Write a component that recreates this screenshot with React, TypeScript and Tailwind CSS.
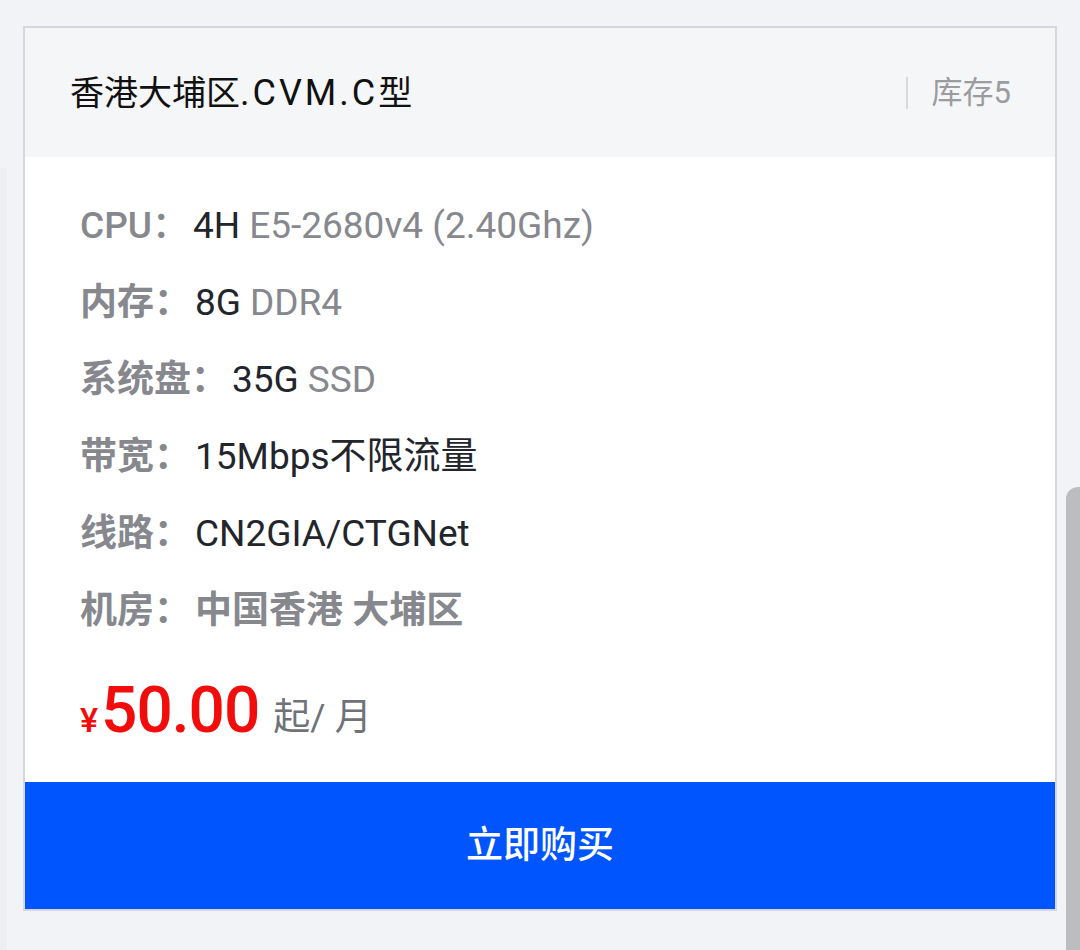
const specs = [
  { label: "CPU", main: "4H", extra: "E5-2680v4 (2.40Ghz)" },
  { label: "内存", main: "8G", extra: "DDR4" },
  { label: "系统盘", main: "35G", extra: "SSD" },
  { label: "带宽", main: "15Mbps不限流量" },
  { label: "线路", main: "CN2GIA/CTGNet" },
  { label: "机房", place: "中国香港 大埔区" },
];

const font = "font-['Roboto','Noto_Sans_CJK_SC',sans-serif]";

export function ProductCard() {
  return (
    <div className="w-[1034px] border-2 border-[#d6d7dc] bg-white">
      <div className="flex h-[129px] items-center bg-[#f5f6f8] pl-[45px] pr-[44px]">
        <h3 className="flex-1 text-[34px] leading-none text-[#111]">
          香港大埔区<span className="text-[36px] tracking-[3px]">.CVM.C</span>型
        </h3>
        <span className="mr-[24px] h-[32px] w-[2px] bg-[#d9d9dc]" />
        <span className="text-[31px] leading-none text-[#9c9c9f]">库存5</span>
      </div>
      <div className="pl-[55px] pt-[30px]">
        {specs.map((s) => (
          <div key={s.label} className="flex h-[77px] items-center text-[37px] leading-none">
            <span
              className={
                s.label === "CPU"
                  ? "font-medium text-[#86888e]"
                  : "font-semibold text-[#86888e]"
              }
            >
              {s.label}：
            </span>
            {s.main && <span className="ml-[4px] text-[#22252b]">{s.main}</span>}
            {s.extra && <span className="ml-[9px] text-[#86888e]">{s.extra}</span>}
            {s.place && (
              <span className="ml-[4px] font-semibold text-[#86888e]">{s.place}</span>
            )}
          </div>
        ))}
        <div className="flex h-[133px] items-center pb-[10px]">
          <span className="mt-[18px] text-[34px] font-medium leading-none text-[#f20d0d]">¥</span>
          <span className="ml-[3px] text-[64px] font-medium leading-none tracking-[-1px] text-[#f20d0d]">
            50.00
          </span>
          <span className="ml-[14px] mt-[14px] text-[37px] leading-none text-[#707277]">
            起/ 月
          </span>
        </div>
      </div>
      <button className="flex h-[127px] w-full items-center justify-center bg-[#0055ff] text-[37px] font-medium text-white">
        立即购买
      </button>
    </div>
  );
}

export default function App() {
  return (
    <div className={`relative h-[950px] w-full overflow-hidden bg-[#f2f3f6] pl-[23px] pt-[26px] ${font}`}>
      <div className="absolute left-0 top-[168px] h-full w-[7px] bg-[#eceef1]" />
      <ProductCard />
      <div className="absolute bottom-0 right-0 top-[487px] w-[14px] rounded-tl-[12px] bg-[#bdbdbf]" />
    </div>
  );
}
